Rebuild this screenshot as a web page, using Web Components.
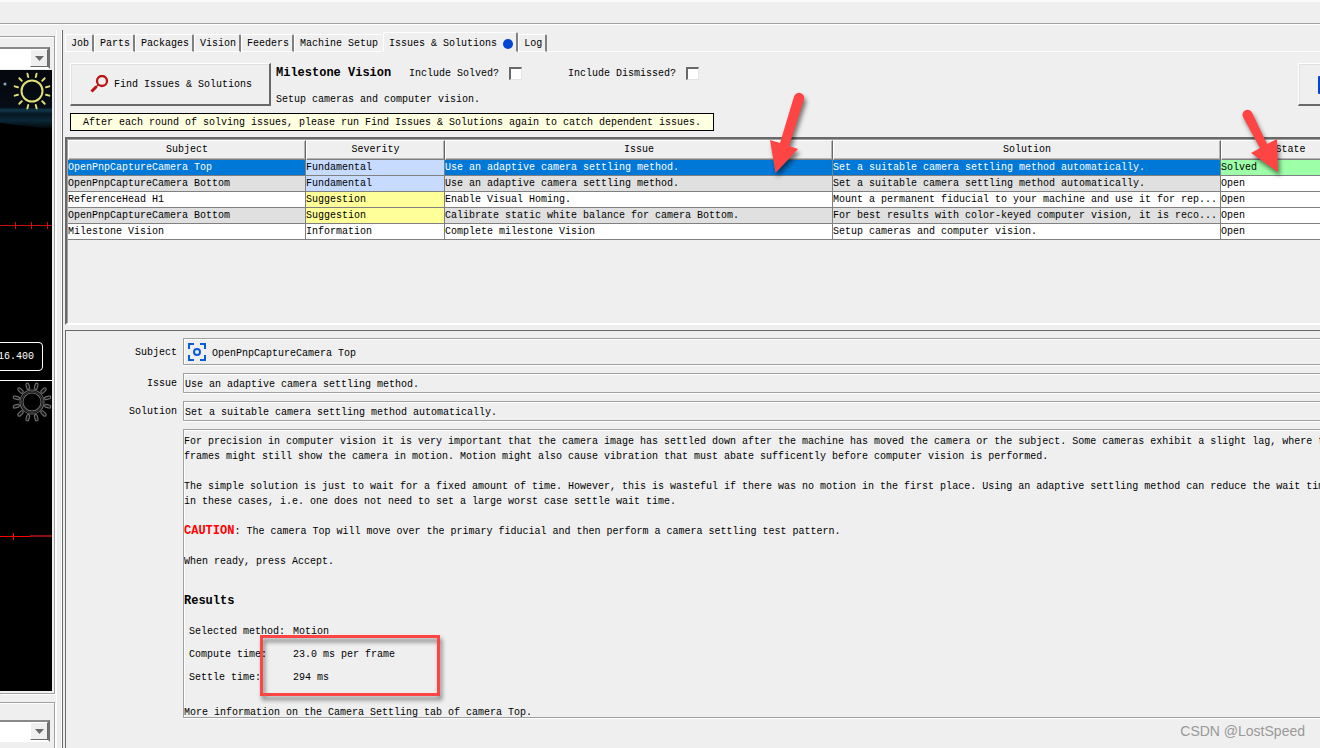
<!DOCTYPE html>
<html lang="en">
<head>
<meta charset="utf-8">
<title>OpenPnP - Issues &amp; Solutions</title>
<style>
  html, body { margin: 0; height: 100%; }
  body { overflow: hidden; background: #efefef; color: #000; font: 10px/15px "Liberation Mono", monospace; }
</style>
</head>
<body>
<op-app></op-app>
<script>
const define = (name, html, setup) => {
  const tpl = document.createElement('template');
  tpl.innerHTML = html;
  customElements.define(name, class extends HTMLElement {
    constructor() {
      super();
      this.attachShadow({ mode: 'open' }).append(tpl.content.cloneNode(true));
    }
    connectedCallback() { if (setup) setup(this, this.shadowRoot); }
  });
};

/* Combo box with a raised arrow */
define('op-combo', `
<style>
  :host { display: block; position: relative; height: 22px; box-sizing: border-box;
    border: solid; border-width: 2px 2px 2px 0; border-color: #8a8a8a #707070 #fff #fff; background: #fff; }
  select { appearance: none; width: 100%; height: 100%; border: 0; background: #fff; font: inherit; }
  span { position: absolute; right: 0; top: 0; bottom: 0; width: 18px; box-sizing: border-box; background: #efefef;
    border: 1px solid; border-color: #fff #696969 #696969 #fff; display: grid; place-items: center; pointer-events: none; }
</style>
<select aria-label="Camera"><option></option></select>
<span><svg width="9" height="5"><path d="M0 0h9L4.500 5z" fill="#696969"/></svg></span>`);

/* Light control: circle with twelve rays */
define('op-light', `
<style>:host { display: block; width: 40px; height: 40px; } svg { display: block; }</style>
<svg width="40" height="40" viewBox="-20 -20 40 40" fill="none"></svg>`, (host, root) => {
  const on = host.hasAttribute('on');
  const rays = w => Array.from({ length: 12 }, (_, i) =>
    `<path d="M0 -14.500V-18" transform="rotate(${15 + i * 30})" stroke-linecap="round" ${w}/>`).join('');
  root.querySelector('svg').innerHTML = on
    ? `<circle r="10.500" stroke="#e3df78" stroke-width="2"/>${rays('stroke="#e3df78" stroke-width="1.900"')}`
    : `<circle r="10.500" stroke="#707070" stroke-width="4"/><circle r="10.500" stroke="#000" stroke-width="2"/><circle r="10.500" stroke="#444" stroke-width="1"/>
       ${rays('stroke="#707070" stroke-width="4"')}${rays('stroke="#111" stroke-width="1.800"')}`;
});

define('op-camera-view', `
<style>
  :host { display: block; position: relative; overflow: hidden; background: #000; }
  ::slotted(op-light) { position: absolute; left: 12px; top: 1px; }
  .scene { position: absolute; inset: 0; width: 100%; height: 100%; }
  .readout { position: absolute; left: -10px; bottom: 9px; width: 53px; height: 29px; box-sizing: border-box;
    border: 1px solid #fff; border-radius: 4px; color: #fff; line-height: 27px; text-align: right; padding-right: 8px; }
  :host(:not([readout])) .readout { display: none; }
</style>
<svg class="scene"></svg><slot></slot><div class="readout"></div>`, (host, root) => {
  root.querySelector('.readout').textContent = host.getAttribute('readout') || '';
  root.querySelector('.scene').innerHTML = host.hasAttribute('readout')
    ? `<defs><linearGradient id="g" x2="0" y2="1"><stop offset="0" stop-color="#05080e"/><stop offset=".62" stop-color="#060d15"/>
         <stop offset=".67" stop-color="#12384c"/><stop offset=".73" stop-color="#071722"/><stop offset=".84" stop-color="#0b2737"/><stop offset="1" stop-color="#000"/></linearGradient></defs>
       <path d="M0 0H60V60L0 53z" fill="url(#g)"/><circle cx="5" cy="14" r="1.500" fill="#8ab"/>
       <path d="M0 155.500H60M15.500 152v7M31.500 152v7M47.500 152v7" stroke="#c80f14"/>`
    : `<path d="M0 155.500H30M13.500 152v7" stroke="#f00"/><path d="M30 155H60" stroke="#8c0f12" stroke-width="2"/>`;
});

/* Etched frames stacked round the camera panels */
define('op-camera-column', `
<style>
  :host { display: flex; flex-direction: column; gap: 8px; padding: 12px 0 0; box-sizing: border-box; overflow: hidden; }
  section { border: 1px solid #a0a0a0; border-left: 0; box-shadow: 1px 1px #fff, inset 0 1px #fff; margin-right: 1px;
    display: flex; flex-direction: column; box-sizing: border-box; padding: 10px 0 2px; }
  .main { flex: 0 0 658px; }
  .next { flex: 1 0 60px; padding-top: 17px; }
  op-combo { margin-right: 4px; flex: none; }
  op-camera-view { flex: 1; margin-right: 2px; }
  .upper { flex: 0 0 310px; margin-top: 1px; }
  .lower { border-top: 1px solid #fff; }
</style>
<section class="main">
  <op-combo></op-combo>
  <op-camera-view class="upper" readout="16.400"><op-light on></op-light></op-camera-view>
  <op-camera-view class="lower"><op-light></op-light></op-camera-view>
</section>
<section class="next"><op-combo></op-combo></section>`);

define('op-tabs', `
<style>
  :host { display: block; }
  nav { display: flex; align-items: flex-end; height: 21px; }
  nav::after { content: ""; flex: 1; border-bottom: 1px solid #fff; }
  button { font: inherit; color: inherit; background: none; margin: 0; height: 18px; padding: 2px 3px 0 5px; border: solid; white-space: nowrap;
    border-width: 1px 2px 1px 1px; border-color: #fff #808080 #fff #fff; border-radius: 2px 2px 0 0; line-height: 14px; box-sizing: border-box; }
  button[aria-selected=true] { height: 20px; padding-top: 4px; border-bottom-color: transparent; display: flex; align-items: center; gap: 6px; }
  .flat { border-right-color: #efefef; }
  i { width: 10px; height: 10px; border-radius: 50%; background: #0046cf; }
</style>
<nav role="tablist">
  <button role="tab">Job</button><button role="tab">Parts</button><button role="tab">Packages</button><button role="tab">Vision</button><button role="tab">Feeders</button><button role="tab" class="flat">Machine Setup</button><button role="tab" aria-selected="true">Issues &amp; Solutions<i></i></button><button role="tab">Log</button>
</nav>`);

define('op-button', `
<style>
  :host { display: block; }
  button { width: 100%; height: 43px; display: flex; align-items: center; gap: 5px; padding: 1px 0 0 19px; font: inherit; color: inherit;
    background: #efefef; border: solid; border-width: 1px 2px 2px 1px; border-color: #fff #696969 #696969 #fff; box-shadow: inset 1px 1px #e2e2e2; white-space: nowrap; }
</style>
<button type="button"><slot></slot></button>`);

define('op-check', `
<style>
  :host { display: block; }
  label { display: flex; align-items: center; gap: 10px; white-space: nowrap; }
  input { appearance: none; margin: 0; width: 13px; height: 13px; box-sizing: border-box; background: #fff; border: solid; border-width: 2px 1px 1px 2px; border-color: #696969 #e3e3e3 #e3e3e3 #696969; }
</style>
<label><slot></slot><input type="checkbox"></label>`);

define('op-toolbar', `
<style>
  :host { display: block; padding: 11px 0 0 4px; }
  .row { display: flex; height: 43px; }
  .find { flex: 0 0 201px; }
  .info { flex: 1; min-width: 0; margin-left: 5px; padding-top: 3px; }
  .line { display: flex; align-items: center; }
  h2 { margin: 0; width: 133px; font: bold 12px/15px "Liberation Mono", monospace; white-space: nowrap; }
  .solved { width: 159px; }
  p { margin: 11px 0 0; white-space: nowrap; }
  .accept { flex: 0 0 140px; margin-right: -118px; }
  .notice { width: 644px; max-width: 100%; box-sizing: border-box; border: 1px solid #000; background: #ffffe1; margin-top: 7px; height: 18px; line-height: 17px; padding-left: 12px; white-space: nowrap; }
</style>
<div class="row">
  <op-button class="find"><svg width="19" height="19" viewBox="0 0 19 19" fill="none" stroke="#be1111"><circle cx="12" cy="6" r="5" stroke-width="2.300"/><path d="M8.500 9.500L6 12" stroke-width="1.500"/><path d="M6.500 11.500L1.500 16.500" stroke-width="3"/></svg>Find Issues &amp; Solutions</op-button>
  <div class="info">
    <div class="line"><h2>Milestone Vision</h2><op-check class="solved">Include Solved?</op-check><op-check>Include Dismissed?</op-check></div>
    <p>Setup cameras and computer vision.</p>
  </div>
  <op-button class="accept"><svg width="18" height="18"><rect width="18" height="18" rx="1" fill="#0046cf"/></svg></op-button>
</div>
<div class="notice">After each round of solving issues, please run Find Issues &amp; Solutions again to catch dependent issues.</div>`);

define('op-issue-table', `
<style>
  :host { display: block; box-sizing: border-box; height: 188px; overflow: hidden; border: solid #696969; border-width: 2px 0 0 2px; border-bottom: 2px solid #fff; box-shadow: inset 1px 1px #a0a0a0; padding: 1px 0 0 1px; }
  table { table-layout: fixed; width: calc(100% + 40px); border-spacing: 0; border-collapse: separate; }
  .subject { width: 238px; } .narrow { width: 139px; }
  th, td { box-sizing: border-box; padding: 0; font-weight: normal; overflow: hidden; white-space: nowrap; }
  th { height: 20px; border: solid; border-width: 1px 1px 1px 1px; border-color: #fff #696969 #808080 #fff; box-shadow: inset -1px -1px #b4b4b4; line-height: 18px; }
  td { height: 16px; line-height: 15px; border: solid #808080; border-width: 0 1px 1px 0; background: #fff; }
  tr:nth-child(even) td { background: #e0e0e0; }
  tr.sel td { background: #0078d7; color: #fff; }
  tbody tr td.fundamental { background: #c7dbff; color: #000; }
  tbody tr td.suggestion { background: #ffff9a; }
  tbody tr td.solved { background: #9dffa8; color: #000; }
  tbody tr td.open { background: #fff; }
</style>
<table>
  <colgroup><col class="subject"><col class="narrow"><col><col><col class="narrow"></colgroup>
  <thead><tr><th>Subject</th><th>Severity</th><th>Issue</th><th>Solution</th><th>State</th></tr></thead>
  <tbody>
    <tr class="sel"><td>OpenPnpCaptureCamera Top</td><td class="fundamental">Fundamental</td><td>Use an adaptive camera settling method.</td><td>Set a suitable camera settling method automatically.</td><td class="solved">Solved</td></tr>
    <tr><td>OpenPnpCaptureCamera Bottom</td><td class="fundamental">Fundamental</td><td>Use an adaptive camera settling method.</td><td>Set a suitable camera settling method automatically.</td><td class="open">Open</td></tr>
    <tr><td>ReferenceHead H1</td><td class="suggestion">Suggestion</td><td>Enable Visual Homing.</td><td>Mount a permanent fiducial to your machine and use it for rep...</td><td class="open">Open</td></tr>
    <tr><td>OpenPnpCaptureCamera Bottom</td><td class="suggestion">Suggestion</td><td>Calibrate static white balance for camera Bottom.</td><td>For best results with color-keyed computer vision, it is reco...</td><td class="open">Open</td></tr>
    <tr><td>Milestone Vision</td><td>Information</td><td>Complete milestone Vision</td><td>Setup cameras and computer vision.</td><td class="open">Open</td></tr>
  </tbody>
</table>`);

define('op-details', `
<style>
  :host { display: grid; grid-template-columns: 111px 1fr; column-gap: 6px; row-gap: 8px; align-items: start; align-content: start;
    border: solid #696969; border-width: 1px 0 0 1px; padding-top: 7px; box-sizing: border-box; }
  label { text-align: right; align-self: center; line-height: 18px; padding-top: 2px; }
  .box { border: 1px solid #a0a0a0; border-right: 0; box-shadow: inset 1px 1px #fff, 0 1px #fff; box-sizing: border-box; min-width: 0; }
  .subject { height: 27px; display: flex; align-items: center; gap: 5px; padding-left: 3px; }
  input { width: 100%; height: 20px; padding: 2px 0 0 1px; margin: 0; font: inherit; color: inherit; background: none; border-radius: 0; outline: 0; }
  input.plain { border: 0; flex: 1; padding-left: 0; height: 24px; padding-top: 3px; }
  .doc { grid-column: 2; height: 289px; overflow: hidden; white-space: nowrap; padding: 4px 0 0; }
  p { margin: 0 0 15px; }
  b { font: bold 12px "Liberation Mono", monospace; line-height: 0; color: #f00; }
  h3 { font: bold 12px/15px "Liberation Mono", monospace; margin: 25px 0 11px; }
  table { border-spacing: 0; margin: 0 0 16px 1px; }
  th, td { font-weight: normal; text-align: left; padding: 0 8px 0 4px; height: 23px; line-height: 15px; }
  td { padding-left: 0; }
</style>
<label for="s">Subject</label>
<div class="box subject"><svg width="20" height="20" viewBox="0 0 20 20" fill="none" stroke="#0a5bd8" stroke-width="2"><path d="M2 7V2H7M13 2H18V7M18 13V18H13M7 18H2V13"/><circle cx="10" cy="10" r="3"/></svg><input id="s" class="plain" readonly value="OpenPnpCaptureCamera Top"></div>
<label for="i">Issue</label><input id="i" class="box" readonly value="Use an adaptive camera settling method.">
<label for="o">Solution</label><input id="o" class="box" readonly value="Set a suitable camera settling method automatically.">
<div class="box doc">
  <p>For precision in computer vision it is very important that the camera image has settled down after the machine has moved the camera or the subject. Some cameras exhibit a slight lag, where the<br>frames might still show the camera in motion. Motion might also cause vibration that must abate sufficently before computer vision is performed.</p>
  <p>The simple solution is just to wait for a fixed amount of time. However, this is wasteful if there was no motion in the first place. Using an adaptive settling method can reduce the wait time<br>in these cases, i.e. one does not need to set a large worst case settle wait time.</p>
  <p><b>CAUTION</b>: The camera Top will move over the primary fiducial and then perform a camera settling test pattern.</p>
  <p>When ready, press Accept.</p>
  <h3>Results</h3>
  <table>
    <tr><th>Selected method:</th><td>Motion</td></tr>
    <tr><th>Compute time:</th><td>23.0 ms per frame</td></tr>
    <tr><th>Settle time:</th><td>294 ms</td></tr>
  </table>
  <p>More information on the Camera Settling tab of camera Top.</p>
</div>`);

/* Annotation marks laid over the window */
define('op-marks', `
<style>
  :host { position: absolute; inset: 0; pointer-events: none; overflow: hidden; }
  svg { position: absolute; left: 0; top: 0; overflow: visible; filter: drop-shadow(2px 4px 2px rgba(0,0,0,.5)); }
  .frame { position: absolute; left: 260px; top: 635px; width: 180px; height: 61px; box-sizing: border-box; border: 3px solid #ff4444; filter: drop-shadow(2px 4px 2px rgba(0,0,0,.5)); }
  .credit { position: absolute; right: 15px; bottom: 8px; font: 14px/18px "Liberation Sans", sans-serif; color: #999; }
</style>
<svg width="1320" height="200" fill="#ff4444">
  <path d="M794 96.500A5 5 0 0 1 804 99.500L789 146L798 149L775.500 173L770 140L780 143z"/>
  <path d="M1243 117A5 5 0 0 1 1252 112.500L1267 144L1277 139L1278 172L1251 153L1260 148z"/>
</svg>
<div class="frame"></div>
<div class="credit">CSDN @LostSpeed</div>`);

define('op-app', `
<style>
  :host { display: flex; flex-direction: column; height: 100vh; position: relative; overflow: hidden; }
  header { flex: none; height: 24px; box-sizing: border-box; border-top: 2px solid #fafafa; border-bottom: 1px solid #a0a0a0; box-shadow: 0 1px #fff; }
  main { flex: 1; min-height: 0; display: grid; grid-template-columns: 56px 6px minmax(0, 1fr); }
  .split { border: solid #fcfcfc; border-width: 0 1px; background: #efecef; margin-top: 6px; }
  .right { margin-top: 6px; border-left: 1px solid #696969; padding-left: 3px; display: flex; flex-direction: column; min-height: 0; min-width: 0; }
  op-issue-table { margin: 6px 0 5px -1px; flex: none; }
  op-tabs { padding-top: 1px; margin-left: -1px; }
  op-details { flex: 1; margin-left: -1px; }
</style>
<header></header>
<main>
  <op-camera-column></op-camera-column>
  <div class="split"></div>
  <div class="right"><op-tabs></op-tabs><op-toolbar></op-toolbar><op-issue-table></op-issue-table><op-details></op-details></div>
</main>
<op-marks></op-marks>`);
</script>
</body>
</html>
